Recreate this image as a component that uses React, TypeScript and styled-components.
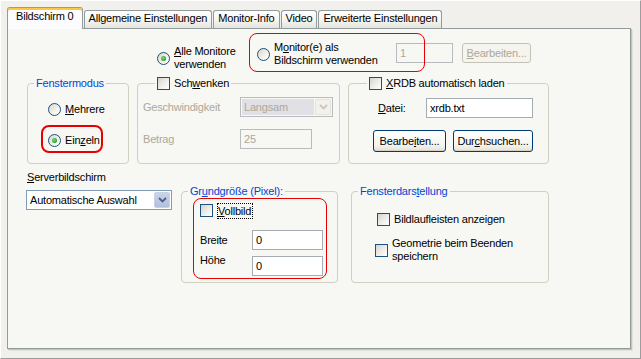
import React from 'react';
import styled, { createGlobalStyle } from 'styled-components';

const GlobalStyle = createGlobalStyle`
  html, body {
    margin: 0;
    padding: 0;
  }
  body {
    font-family: "Liberation Sans", Arial, sans-serif;
    font-size: 11px;
    letter-spacing: -0.2px;
    color: #000;
  }
  * {
    box-sizing: border-box;
  }
`;

const Window = styled.div`
  width: 641px;
  height: 359px;
  padding: 6px 0 0 6px;
  background: #f1f0ec;
  border-top: 1px solid #ffffff;
  border-left: 1px solid #ffffff;
  border-right: 1px solid #9d9d9d;
  border-bottom: 1px solid #9d9d9d;
`;

const TabStrip = styled.div`
  display: flex;
  align-items: flex-end;
  height: 21px;
  position: relative;
  z-index: 2;
`;

const Tab = styled.div<{ $active?: boolean }>`
  height: ${(p) => (p.$active ? 22 : 18)}px;
  padding: ${(p) => (p.$active ? '2px 8px 0' : '1px 4px 0')};
  margin-right: 1px;
  margin-bottom: ${(p) => (p.$active ? -1 : 0)}px;
  line-height: 13px;
  white-space: nowrap;
  border: 1px solid #919b9c;
  border-bottom: none;
  border-radius: 3px 3px 0 0;
  border-top-color: ${(p) => (p.$active ? '#e68b2c' : '#919b9c')};
  background: ${(p) =>
    p.$active ? '#fcfcfe' : 'linear-gradient(#ffffff, #f3f3ef 60%, #e4e3dc)'};
  box-shadow: ${(p) => (p.$active ? 'inset 0 2px 0 #ffc73c' : 'none')};
`;

const Panel = styled.div`
  position: relative;
  width: 624px;
  height: 321px;
  border: 1px solid #919b9c;
  background: #f7f7f4;
  box-shadow: 1px 1px 0 #c4c3bc, 2px 2px 0 #e2e1da;
`;

const TopRow = styled.div`
  display: flex;
  align-items: flex-start;
  height: 48px;
  padding-left: 149px;
`;

const MiddleRow = styled.div`
  display: flex;
  gap: 8px;
  height: 87px;
  padding-left: 19px;
`;

const BottomRow = styled.div`
  display: flex;
  align-items: flex-start;
  margin-top: 7px;
  padding-left: 18px;
`;

const Option = styled.label<{ $w?: number; $mt?: number; $ml?: number }>`
  display: flex;
  align-items: center;
  gap: 4px;
  line-height: 13px;
  width: ${(p) => (p.$w ? `${p.$w}px` : 'auto')};
  margin-top: ${(p) => p.$mt ?? 0}px;
  margin-left: ${(p) => p.$ml ?? 0}px;
  height: ${(p) => (p.$w ? 'auto' : '13px')};
  white-space: nowrap;
`;

const Radio = styled.span<{ $checked?: boolean }>`
  position: relative;
  flex: none;
  width: 13px;
  height: 13px;
  border-radius: 50%;
  border: 1px solid #1c5180;
  background: linear-gradient(135deg, #d8d5cb 0%, #f4f3ee 60%, #ffffff 100%);

  &::after {
    content: '';
    display: ${(p) => (p.$checked ? 'block' : 'none')};
    position: absolute;
    left: 3px;
    top: 3px;
    width: 5px;
    height: 5px;
    border-radius: 50%;
    background: radial-gradient(circle at 40% 40%, #7ee07e, #21a121 70%);
  }
`;

const Check = styled.span`
  flex: none;
  width: 13px;
  height: 13px;
  border: 1px solid #1c5180;
  background: linear-gradient(135deg, #d4d3cc 0%, #efeee9 55%, #ffffff 100%);
`;

const Group = styled.fieldset<{ $w: number }>`
  margin: 0;
  padding: 0;
  min-width: 0;
  width: ${(p) => p.$w}px;
  border: 1px solid #d0d0bf;
  border-radius: 4px;
`;

const Legend = styled.legend<{ $indent: number; $plain?: boolean }>`
  margin-left: ${(p) => p.$indent}px;
  padding: 0 2px;
  line-height: 13px;
  height: 13px;
  color: ${(p) => (p.$plain ? '#000' : '#0046d5')};
`;

const LegendInner = styled.span`
  display: inline-flex;
  align-items: center;
  gap: 4px;
  height: 13px;
`;

const GroupBody = styled.div<{ $h: number; $pt?: number; $pl?: number }>`
  height: ${(p) => p.$h}px;
  padding: ${(p) => p.$pt ?? 0}px 0 0 ${(p) => p.$pl ?? 0}px;
`;

const RadioStack = styled.div`
  display: flex;
  flex-direction: column;
  gap: 18px;
`;

const FormGrid = styled.div<{ $label: number; $gap: number; $mt?: number }>`
  display: grid;
  grid-template-columns: ${(p) => p.$label}px auto;
  grid-auto-rows: 20px;
  row-gap: ${(p) => p.$gap}px;
  margin-top: ${(p) => p.$mt ?? 0}px;
  align-items: center;
`;

const FieldLabel = styled.span<{ $disabled?: boolean; $top?: boolean }>`
  line-height: 13px;
  color: ${(p) => (p.$disabled ? '#aca899' : '#000')};
  align-self: ${(p) => (p.$top ? 'start' : 'center')};
  margin-top: ${(p) => (p.$top ? -2 : 0)}px;
  white-space: nowrap;
`;

const TextBox = styled.input<{ $w: number; $mt?: number }>`
  width: ${(p) => p.$w}px;
  height: 20px;
  margin: ${(p) => p.$mt ?? 0}px 0 0 0;
  padding: 0 0 0 3px;
  font: inherit;
  letter-spacing: inherit;
  color: #000;
  background: #ffffff;
  border: 1px solid #a5acb2;
  border-radius: 0;
  outline: none;

  &:disabled {
    color: #aca899;
    background: #f7f7f4;
    border-color: #b8bcc0;
  }
`;

const Button = styled.button<{ $w: number; $h?: number; $mt?: number; $ml?: number }>`
  width: ${(p) => p.$w}px;
  height: ${(p) => p.$h ?? 22}px;
  margin: ${(p) => p.$mt ?? 0}px 0 0 ${(p) => p.$ml ?? 0}px;
  padding: 0;
  font: inherit;
  letter-spacing: inherit;
  color: #000;
  border: 1px solid #003c74;
  border-radius: 3px;
  background: linear-gradient(#ffffff, #f4f4f0 70%, #e2e1d9);
  box-shadow: inset 0 -1px 0 #d6d0c5;

  &:disabled {
    color: #aca899;
    border-color: #c4c2b8;
    background: #f5f4ee;
    box-shadow: none;
  }
`;

const Combo = styled.div<{ $w: number; $disabled?: boolean; $mt?: number }>`
  display: flex;
  width: ${(p) => p.$w}px;
  height: 20px;
  margin-top: ${(p) => p.$mt ?? 0}px;
  padding: 1px;
  border: 1px solid ${(p) => (p.$disabled ? '#b8bcc0' : '#7f9db9')};
  background: ${(p) => (p.$disabled ? '#f7f7f4' : '#ffffff')};
  color: ${(p) => (p.$disabled ? '#aca899' : '#000')};
`;

const ComboValue = styled.div<{ $disabled?: boolean }>`
  flex: 1;
  padding-left: 2px;
  line-height: 16px;
  white-space: nowrap;
  background: ${(p) => (p.$disabled ? '#e1e0e5' : 'transparent')};
  margin-right: ${(p) => (p.$disabled ? 1 : 0)}px;
`;

const ComboButton = styled.div<{ $disabled?: boolean }>`
  flex: none;
  width: 16px;
  display: flex;
  align-items: center;
  justify-content: center;
  border: 1px solid ${(p) => (p.$disabled ? '#e3e2dc' : '#c8d2e6')};
  border-radius: 2px;
  background: ${(p) =>
    p.$disabled ? '#f2f1ec' : 'linear-gradient(#c9d3ea, #b3c0dc)'};
`;

const ServerColumn = styled.div`
  width: 146px;
  display: flex;
  flex-direction: column;
`;

const PlainLabel = styled.span`
  line-height: 13px;
  padding-left: 1px;
`;

const FocusLabel = styled.span`
  line-height: 13px;
  padding: 1px 1px 0 0;
  border: 1px dotted #000;
`;

const ButtonRow = styled.div<{ $ml: number; $mt: number }>`
  display: flex;
  gap: 7px;
  margin: ${(p) => p.$mt}px 0 0 ${(p) => p.$ml}px;
`;

const FieldRow = styled.div<{ $ml: number }>`
  display: flex;
  align-items: center;
  margin-left: ${(p) => p.$ml}px;
`;

const Highlight = styled.div<{ $x: number; $y: number; $w: number; $h: number; $thick?: boolean }>`
  position: absolute;
  left: ${(p) => p.$x}px;
  top: ${(p) => p.$y}px;
  width: ${(p) => p.$w}px;
  height: ${(p) => p.$h}px;
  border: ${(p) => (p.$thick ? 2 : 1)}px solid #e60000;
  border-radius: 8px;
  pointer-events: none;
`;

const Chevron: React.FC<{ color: string }> = ({ color }) => (
  <svg width="9" height="6" viewBox="0 0 9 6">
    <path d="M1 1 L4.5 4.5 L8 1" fill="none" stroke={color} strokeWidth="1.8" />
  </svg>
);

const App: React.FC = () => {
  return (
    <>
      <GlobalStyle />
      <Window>
        <TabStrip>
          <Tab $active>Bildschirm 0</Tab>
          <Tab>Allgemeine Einstellungen</Tab>
          <Tab>Monitor-Info</Tab>
          <Tab>Video</Tab>
          <Tab>Erweiterte Einstellungen</Tab>
        </TabStrip>
        <Panel>
          <TopRow>
            <Option $w={100} $mt={16}>
              <Radio $checked />
              <span>
                <u>A</u>lle Monitore
                <br />
                verwenden
              </span>
            </Option>
            <Option $w={139} $mt={12}>
              <Radio />
              <span>
                M<u>o</u>nitor(e) als
                <br />
                Bildschirm verwenden
              </span>
            </Option>
            <TextBox $w={57} $mt={14} disabled value="1" readOnly />
            <Button $w={69} $h={20} $mt={14} $ml={9} disabled>
              <u>B</u>earbeiten...
            </Button>
          </TopRow>

          <MiddleRow>
            <Group $w={102}>
              <Legend $indent={6}>Fenstermodus</Legend>
              <GroupBody $h={73} $pt={13} $pl={20}>
                <RadioStack>
                  <Option>
                    <Radio />
                    <span>
                      <u>M</u>ehrere
                    </span>
                  </Option>
                  <Option>
                    <Radio $checked />
                    <span>
                      Ein<u>z</u>eln
                    </span>
                  </Option>
                </RadioStack>
              </GroupBody>
            </Group>

            <Group $w={203}>
              <Legend $indent={17} $plain>
                <LegendInner>
                  <Check />
                  <span>
                    Sch<u>w</u>enken
                  </span>
                </LegendInner>
              </Legend>
              <GroupBody $h={73} $pt={7} $pl={5}>
                <FormGrid $label={97} $gap={12}>
                  <FieldLabel $disabled>Geschwindigkeit</FieldLabel>
                  <Combo $w={93} $disabled>
                    <ComboValue $disabled>Langsam</ComboValue>
                    <ComboButton $disabled>
                      <Chevron color="#c9c7ba" />
                    </ComboButton>
                  </Combo>
                  <FieldLabel $disabled>Betrag</FieldLabel>
                  <TextBox $w={72} disabled value="25" readOnly />
                </FormGrid>
              </GroupBody>
            </Group>

            <Group $w={201}>
              <Legend $indent={18} $plain>
                <LegendInner>
                  <Check />
                  <span>
                    <u>X</u>RDB automatisch laden
                  </span>
                </LegendInner>
              </Legend>
              <GroupBody $h={73} $pt={8}>
                <FieldRow $ml={29}>
                  <FieldLabel style={{ width: 48 }}>
                    <u>D</u>atei:
                  </FieldLabel>
                  <TextBox $w={107} value="xrdb.txt" readOnly />
                </FieldRow>
                <ButtonRow $ml={24} $mt={12}>
                  <Button $w={73}>
                    Bearbe<u>i</u>ten...
                  </Button>
                  <Button $w={80}>
                    Dur<u>c</u>hsuchen...
                  </Button>
                </ButtonRow>
              </GroupBody>
            </Group>
          </MiddleRow>

          <BottomRow>
            <ServerColumn>
              <PlainLabel>
                <u>S</u>erverbildschirm
              </PlainLabel>
              <Combo $w={146} $mt={6}>
                <ComboValue>Automatische Auswahl</ComboValue>
                <ComboButton>
                  <Chevron color="#4d6185" />
                </ComboButton>
              </Combo>
            </ServerColumn>

            <Group $w={157} style={{ marginLeft: 9, marginTop: 14 }}>
              <Legend $indent={6}>
                Gr<u>u</u>ndgröße (Pixel):
              </Legend>
              <GroupBody $h={84} $pt={6} $pl={18}>
                <Option>
                  <Check />
                  <FocusLabel>
                    <u>V</u>ollbild
                  </FocusLabel>
                </Option>
                <FormGrid $label={52} $gap={6} $mt={13}>
                  <FieldLabel>Breite</FieldLabel>
                  <TextBox $w={71} value="0" readOnly />
                  <FieldLabel $top>Höhe</FieldLabel>
                  <TextBox $w={71} value="0" readOnly />
                </FormGrid>
              </GroupBody>
            </Group>

            <Group $w={198} style={{ marginLeft: 13, marginTop: 14 }}>
              <Legend $indent={6}>
                Fensterdars<u>t</u>ellung
              </Legend>
              <GroupBody $h={84} $pt={15}>
                <Option $ml={25}>
                  <Check />
                  <span>Bildlaufleisten anzeigen</span>
                </Option>
                <Option $w={170} $ml={23} $mt={11}>
                  <Check />
                  <span>
                    Geometrie beim Beenden
                    <br />
                    speichern
                  </span>
                </Option>
              </GroupBody>
            </Group>
          </BottomRow>

          <Highlight $x={241} $y={4} $w={176} $h={39} />
          <Highlight $x={33} $y={96} $w={62} $h={28} $thick />
          <Highlight $x={185} $y={169} $w={134} $h={81} />
        </Panel>
      </Window>
    </>
  );
};

export default App;
